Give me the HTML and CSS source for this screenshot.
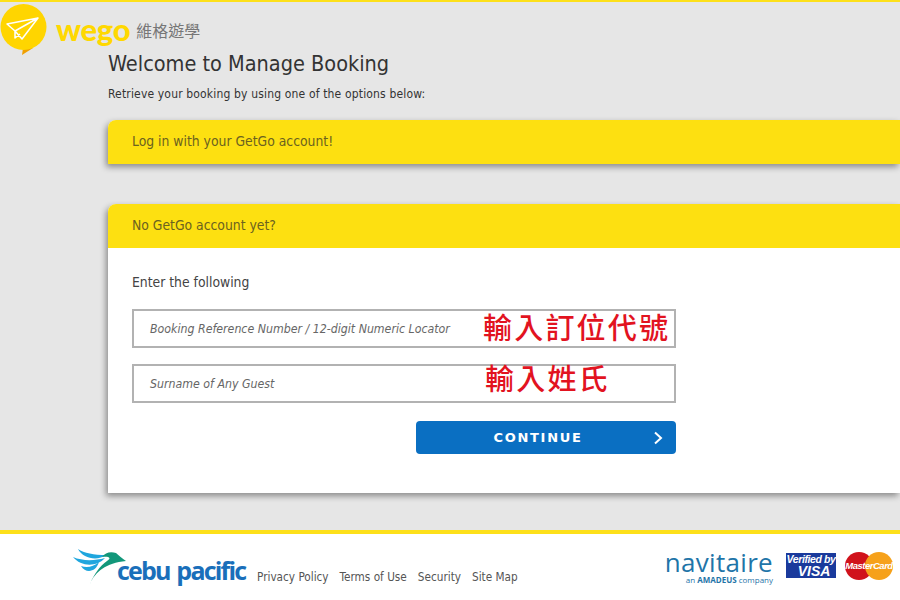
FILE: index.html
```html
<!DOCTYPE html>
<html lang="en">
  <head>
    <meta charset="UTF-8" />
    <meta name="viewport" content="width=device-width, initial-scale=1.0" />
    <title>Manage Booking</title>
    <link rel="stylesheet" href="styles.css">
  </head>
  <body>
    <!-- Watermark logo -->
    <div class="wego">
      <svg class="wego-badge" width="48" height="58" viewBox="0 0 48 58">
        <path d="M22 55 L23 48 L33 48 Z" fill="#f0a000" />
        <circle cx="23.500" cy="27" r="23" fill="#ffd500" />
        <path d="M7 24 L38 18 L22 39 L15 31 Z M38 18 L15 31 L15 38 L20 34" fill="none" stroke="#fff" stroke-width="1.500" stroke-linejoin="round" />
      </svg>
      <span class="wego-name">wego</span>
      <span class="wego-sub">維格遊學</span>
    </div>

    <main class="content">
      <h1 class="title">Welcome to Manage Booking</h1>
      <p class="intro">Retrieve your booking by using one of the options below:</p>

      <section class="panel panel-login">
        <div class="panel-head">Log in with your GetGo account!</div>
      </section>

      <section class="panel">
        <div class="panel-head">No GetGo account yet?</div>
        <div class="panel-body">
          <p class="enter">Enter the following</p>
          <div class="field">
            <span class="hint">Booking Reference Number / 12-digit Numeric Locator</span>
            <span class="note note-ref">輸入訂位代號</span>
          </div>
          <div class="field">
            <span class="hint">Surname of Any Guest</span>
            <span class="note note-name">輸入姓氏</span>
          </div>
          <button class="continue">
            <span>CONTINUE</span>
            <svg class="chevron" width="10" height="14" viewBox="0 0 10 14">
              <path d="M2 1.500 L8 7 L2 12.500" fill="none" stroke="#fff" stroke-width="2" />
            </svg>
          </button>
        </div>
      </section>
    </main>

    <footer class="footer">
      <div class="cebu">
        <svg class="cebu-bird" width="70" height="45" viewBox="0 0 70 45">
          <path d="M10 4 C16 8 26 10 38 10 C30 16 15 14 10 4 Z" fill="#1fa6de" />
          <path d="M5 12 C14 16 26 16 37 13 C29 22 13 22 5 12 Z" fill="#1fa6de" />
          <path d="M13 21 C19 23 25 22 31 17 C28 27 18 29 13 21 Z" fill="#1fa6de" />
          <path d="M22 39 C27 27 38 18 58 16 C54 13 51 11 48 8 C42 6 37 8 34 12 C41 11 44 13 39 16 C32 21 26 29 22 39 Z" fill="#12977a" />
        </svg>
        <span class="cebu-name">cebu pacific</span>
      </div>
      <nav class="links">
        <a>Privacy Policy</a>
        <a>Terms of Use</a>
        <a>Security</a>
        <a>Site Map</a>
      </nav>
      <div class="partners">
        <div class="navitaire">
          <span class="nav-name">navitaire</span>
          <span class="nav-sub">an <b>AMADEUS</b> company</span>
        </div>
        <div class="visa">
          <span class="visa-top">Verified by</span>
          <span class="visa-name">VISA</span>
        </div>
        <div class="mastercard">
          <span class="mc-red"></span>
          <span class="mc-orange"></span>
          <span class="mc-name">MasterCard</span>
        </div>
      </div>
    </footer>
  </body>
</html>
```

FILE: styles.css
```css
html,
body {
  height: 100%;
}

body {
  margin: 0;
  height: 600px;
  overflow: hidden;
  display: flex;
  flex-direction: column;
  background-color: #e6e6e6;
  border-top: 2px solid #fde01a;
  box-sizing: border-box;
  font-family: "DejaVu Sans", Verdana, sans-serif;
  font-stretch: condensed;
  color: #444;
  position: relative;
}

/* Logo laid over the page */
.wego {
  position: absolute;
  left: 0;
  top: -2px;
  display: flex;
  align-items: flex-start;
  font-stretch: normal;
}

.wego-name {
  margin: 11px 0 0 8px;
  font-family: "Lato", sans-serif;
  font-size: 31px;
  line-height: 36px;
  font-weight: 900;
  letter-spacing: -0.300px;
  color: #ffd800;
}

.wego-sub {
  margin: 18px 0 0 6px;
  font-family: "Noto Sans CJK TC", sans-serif;
  font-size: 16px;
  line-height: 24px;
  color: #777;
}

.content {
  flex: 1;
  padding: 50px 0 0 108px;
}

.title {
  margin: 0;
  font-size: 21.500px;
  line-height: 24px;
  font-weight: normal;
  color: #333;
}

.intro {
  margin: 10px 0 0;
  font-size: 12px;
  line-height: 16px;
  letter-spacing: 0.160px;
  color: #333;
}

.panel {
  border-radius: 8px 0 0 0;
  box-shadow: -2px 3px 6px rgba(0, 0, 0, 0.4);
  background-color: #fff;
}

.panel-login {
  margin: 18px 0 40px;
}

.panel-head {
  height: 44px;
  padding-left: 24px;
  line-height: 43px;
  font-size: 13.800px;
  color: #6b6220;
  background-color: #fde011;
  border-radius: 8px 0 0 0;
}

.panel-body {
  height: 245px;
  box-sizing: border-box;
  padding: 24px 0 0 24px;
}

.enter {
  margin: 0 0 17px;
  font-size: 13.800px;
  line-height: 20px;
  color: #444;
}

.field {
  width: 544px;
  height: 39px;
  box-sizing: border-box;
  margin-bottom: 16px;
  border: 2px solid #b2b2b2;
  padding-left: 16px;
  position: relative;
  background-color: #fff;
}

.hint {
  font-size: 12.250px;
  line-height: 37px;
  font-style: italic;
  color: #666;
}

.note {
  position: absolute;
  top: -5px;
  font-family: "Noto Sans CJK TC", sans-serif;
  font-stretch: normal;
  font-size: 29px;
  line-height: 40px;
  letter-spacing: 2.200px;
  font-weight: 500;
  color: #e2131f;
}

.note-ref {
  left: 349px;
}

.note-name {
  left: 351px;
  top: -9px;
}

.continue {
  display: flex;
  align-items: center;
  width: 260px;
  height: 33px;
  margin: 18px 0 0 284px;
  padding: 0 13px 0 0;
  border: none;
  border-radius: 4px;
  background-color: #0a6fc2;
  color: #fff;
  cursor: pointer;
  font-family: "DejaVu Sans", Verdana, sans-serif;
  font-size: 13px;
  font-weight: bold;
  letter-spacing: 1.700px;
}

.continue span {
  flex: 1;
  padding-left: 7px;
  text-align: center;
}

.footer {
  height: 66px;
  display: flex;
  background-color: #fff;
  border-top: 4px solid #fde01a;
}

.cebu {
  width: 185px;
  margin-left: 72px;
  position: relative;
  font-stretch: normal;
}

.cebu-bird {
  position: absolute;
  left: -4px;
  top: 11px;
}

.cebu-name {
  position: absolute;
  left: 45px;
  top: 20px;
  font-family: "Open Sans", sans-serif;
  font-size: 25px;
  line-height: 32px;
  font-weight: 700;
  letter-spacing: -1.800px;
  word-spacing: 2px;
  white-space: nowrap;
  color: #1a6fba;
}

.links {
  display: flex;
  gap: 11px;
  padding-top: 35px;
  font-size: 11.700px;
  line-height: 16px;
  color: #555;
}

.partners {
  margin-left: auto;
  display: flex;
  align-items: flex-start;
  padding: 15px 7px 0 0;
  font-stretch: normal;
}

.navitaire {
  display: flex;
  flex-direction: column;
  align-items: flex-end;
  width: 108px;
  font-family: "Open Sans", sans-serif;
  color: #1f75a8;
}

.nav-name {
  font-size: 26px;
  line-height: 26px;
  letter-spacing: 0.300px;
}

.nav-sub {
  font-size: 8px;
  line-height: 10px;
  white-space: nowrap;
}

.visa {
  width: 50px;
  height: 25px;
  margin: 4px 0 0 13px;
  background-color: #1a3a9c;
  color: #fff;
  font-family: "Liberation Sans", Arial, sans-serif;
  font-style: italic;
  font-weight: bold;
  text-align: center;
  display: flex;
  flex-direction: column;
}

.visa-top {
  font-size: 10.500px;
  line-height: 12px;
  letter-spacing: -0.400px;
  white-space: nowrap;
}

.visa-name {
  font-size: 14px;
  line-height: 13px;
  padding-left: 6px;
}

.mastercard {
  width: 48px;
  height: 28px;
  margin: 3px 0 0 9px;
  position: relative;
}

.mc-red,
.mc-orange {
  position: absolute;
  top: 0;
  width: 28px;
  height: 28px;
  border-radius: 50%;
}

.mc-red {
  left: 0;
  background-color: #d0121b;
}

.mc-orange {
  right: 0;
  background-color: #f6a11a;
}

.mc-name {
  position: absolute;
  left: 0;
  top: 7px;
  width: 48px;
  font-family: "Liberation Sans", Arial, sans-serif;
  font-size: 9.500px;
  line-height: 13px;
  font-style: italic;
  font-weight: bold;
  letter-spacing: -0.500px;
  white-space: nowrap;
  text-align: center;
  color: #fff;
}
```
